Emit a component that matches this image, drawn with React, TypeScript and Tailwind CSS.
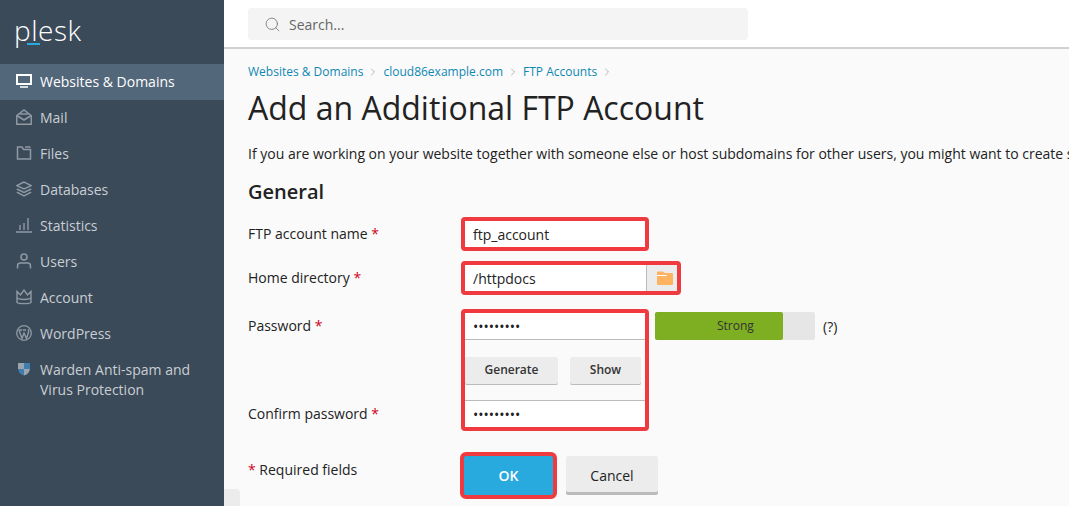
import { Search, ChevronRight } from 'lucide-react';
import type { ReactNode } from 'react';

const sans = { fontFamily: '"Open Sans", sans-serif' };

const MonitorIcon = () => (
  <svg width="16" height="14" viewBox="0 0 16 14" fill="none" stroke="currentColor">
    <rect x="1" y="1" width="14" height="9" strokeWidth="2" />
    <path d="M4 13h8" strokeWidth="1.5" />
  </svg>
);
const MailIcon = () => (
  <svg width="16" height="16" viewBox="0 0 16 16" fill="none" stroke="currentColor" strokeWidth="1.5">
    <path d="M.8 6.500 8 1l7.200 5.500v8.700H.8z" />
    <path d="M.8 6.500 8 11l7.200-4.500M3.500 5h9" />
  </svg>
);
const FilesIcon = () => (
  <svg width="16" height="14" viewBox="0 0 16 14" fill="none" stroke="currentColor" strokeWidth="1.5">
    <path d="M1.500 1v12h13V3.500H7.500L6 1z" />
    <path d="M9 1h5.500" />
  </svg>
);
const DatabaseIcon = () => (
  <svg width="16" height="16" viewBox="0 0 16 16" fill="none" stroke="currentColor" strokeWidth="1.5">
    <path d="M8 1 .8 4.600 8 8l7.200-3.400z" />
    <path d="M.8 8 8 11.400 15.200 8M.8 11.200 8 14.800l7.200-3.600" />
  </svg>
);
const StatsIcon = () => (
  <svg width="16" height="16" viewBox="0 0 16 16" fill="none" stroke="currentColor" strokeWidth="1.4">
    <path d="M0 15h16M4 13V8M8 13V6M12 13V1" />
  </svg>
);
const UserIcon = () => (
  <svg width="16" height="16" viewBox="0 0 16 16" fill="none" stroke="currentColor" strokeWidth="1.5">
    <circle cx="8" cy="4" r="3" />
    <path d="M1.500 15.500V13c0-2 1.500-3 3-3h7c1.500 0 3 1 3 3v2.500" />
  </svg>
);
const CrownIcon = () => (
  <svg width="16" height="16" viewBox="0 0 16 16" fill="none" stroke="currentColor" strokeWidth="1.4">
    <path d="M1 2.500 4.500 6 8 1l3.500 5L15 2.500v11c-2 1.500-12 1.500-14 0z" />
    <path d="M1 9c3 2 11 2 14 0" />
  </svg>
);
const WordPressIcon = () => (
  <svg width="16" height="16" viewBox="0 0 16 16" fill="none" stroke="currentColor">
    <circle cx="8" cy="8" r="7.300" strokeWidth="1.300" />
    <path d="M3 5.200 6 13.500 8 8 10.500 13.500 12.600 7c.4-1.300-.2-2.200-.6-2.700M2.600 5h3.600M7 5h3" strokeWidth="1.400" />
  </svg>
);
const ShieldIcon = () => (
  <svg width="12" height="14" viewBox="0 0 12 14">
    <path d="M0 1h6v6H0z" fill="#9aa5b0" />
    <path d="M6 1h6v6H6z" fill="#3f7fb0" />
    <path d="M0 7h6v6.500C3 13 1 11 0 7z" fill="#3f7fb0" />
    <path d="M6 7h6c-1 4-3 6-6 6.500z" fill="#9aa5b0" />
  </svg>
);
const FolderIcon = () => (
  <svg width="16" height="14" viewBox="0 0 16 14">
    <path d="M0 1.500A1 1 0 0 1 1 .5h5l1.500 1.500H15a1 1 0 0 1 1 1V4H0z" fill="#fdb35f" />
    <path d="M0 5h9l1-1h6v9a1 1 0 0 1-1 1H1a1 1 0 0 1-1-1z" fill="#fdb35f" />
    <path d="M0 4h10L9 5H0z" fill="#ffffff" />
  </svg>
);

const navItems: { label: ReactNode; icon: ReactNode; active?: boolean }[] = [
  { label: 'Websites & Domains', icon: <MonitorIcon />, active: true },
  { label: 'Mail', icon: <MailIcon /> },
  { label: 'Files', icon: <FilesIcon /> },
  { label: 'Databases', icon: <DatabaseIcon /> },
  { label: 'Statistics', icon: <StatsIcon /> },
  { label: 'Users', icon: <UserIcon /> },
  { label: 'Account', icon: <CrownIcon /> },
  { label: 'WordPress', icon: <WordPressIcon /> },
];

const Req = () => <span className="text-[#d0021b]">*</span>;

const Sidebar = () => (
  <aside className="w-[224px] shrink-0 bg-[#3b4a59] text-[14px]">
    <div className="h-[64px] pl-[14px] pt-[9px]">
      <div className="relative text-[28px] leading-[42px] font-light tracking-[0.5px] text-white">
        plesk
        <span className="absolute left-[13px] top-[34px] h-[2px] w-[13px] bg-[#28aade]" />
      </div>
    </div>
    <nav>
      {navItems.map((item, i) => (
        <div
          key={i}
          className={`flex h-[36px] items-center pb-[2px] pl-[16px] ${item.active ? 'bg-[#53677b] text-white' : 'text-[#c9ced4]'}`}
        >
          <span className={`flex w-[24px] shrink-0 ${item.active ? 'text-white' : 'text-[#8f99a3]'}`}>{item.icon}</span>
          {item.label}
        </div>
      ))}
      <div className="flex pl-[16px] pt-[8px] leading-[20px] text-[#c9ced4]">
        <span className="flex w-[24px] shrink-0 pl-[2px] pt-[2px]"><ShieldIcon /></span>
        <span>Warden Anti-spam and<br />Virus Protection</span>
      </div>
    </nav>
  </aside>
);

const Field = ({ value }: { value: string }) => (
  <div className="flex h-[26px] items-center bg-white pl-[8px] text-[14px] text-[#222]">
    {value}
  </div>
);

const FormButton = ({ children, className }: { children: ReactNode; className: string }) => (
  <div className={`flex h-[27px] items-center justify-center rounded-[2px] bg-[#ececec] text-[12px] font-semibold text-[#333] shadow-[0_1px_0_#bbb] ${className}`}>
    {children}
  </div>
);

export default function App() {
  return (
    <div className="flex h-[506px] w-[1069px] overflow-hidden bg-[#fafafa] text-[#222]" style={sans}>
      <Sidebar />
      <main className="relative min-w-0 flex-1">
        <header className="flex h-[49px] items-start border-b-2 border-[#d0d0d0] bg-white pl-[24px] pt-[8px]">
          <div className="flex h-[32px] w-[500px] items-center gap-[8px] rounded-[4px] bg-[#f4f4f4] pl-[16px] text-[14px] text-[#666]">
            <Search size={17} strokeWidth={1.2} className="text-[#777]" />
            Search...
          </div>
        </header>

        <div className="pl-[24px]">
          <div className="mt-[15px] flex h-[16px] items-center text-[12px] text-[#0f87b3]">
            Websites &amp; Domains
            <ChevronRight size={12} strokeWidth={1.2} className="mx-[4px] text-[#888]" />
            cloud86example.com
            <ChevronRight size={12} strokeWidth={1.2} className="mx-[4px] text-[#888]" />
            FTP Accounts
            <ChevronRight size={12} strokeWidth={1.2} className="mx-[4px] text-[#888]" />
          </div>
          <h1 className="mt-[6px] text-[32px] leading-[44px] text-[#222]">Add an Additional FTP Account</h1>
          <p className="mt-[14px] whitespace-nowrap text-[14px] leading-[20px]">
            If you are working on your website together with someone else or host subdomains for other users, you might want to create separate FTP accounts
          </p>
          <h2 className="mt-[14px] text-[20px] leading-[28px] font-semibold">General</h2>

          <div className="mt-[11px] grid grid-cols-[213px_auto] justify-start text-[14px]">
            <label className="pt-[7px] leading-[20px]">FTP account name <Req /></label>
            <div className="w-[188px] rounded-[4px] border-4 border-[#ef3a3f]">
              <Field value="ftp_account" />
            </div>

            <label className="mt-[10px] pt-[7px] leading-[20px]">Home directory <Req /></label>
            <div className="mt-[10px] flex w-[220px] rounded-[4px] border-4 border-[#ef3a3f]">
              <div className="flex-1 border-r border-[#bbb]"><Field value="/httpdocs" /></div>
              <div className="flex w-[30px] items-center justify-center bg-[#ececec] pl-[6px]"><FolderIcon /></div>
            </div>

            <div className="mt-[14px] flex flex-col justify-between pb-[7px] pt-[7px] leading-[20px]">
              <label>Password <Req /></label>
              <label>Confirm password <Req /></label>
            </div>
            <div className="mt-[14px] flex items-start">
              <div className="w-[188px] rounded-[4px] border-4 border-[#ef3a3f]">
                <div className="border-b border-[#bbb]"><Field value="•••••••••" /></div>
                <div className="flex h-[60px] items-center justify-between pr-[4px]">
                  <FormButton className="w-[93px]">Generate</FormButton>
                  <FormButton className="w-[71px]">Show</FormButton>
                </div>
                <div className="border-t border-[#bbb]"><Field value="•••••••••" /></div>
              </div>
              <div className="ml-[6px] mt-[3px] flex h-[28px] w-[160px] rounded-[2px] bg-[#e6e6e6] text-[12px]">
                <div className="relative flex w-[128px] items-center rounded-[2px] bg-[#7eae22] text-[#333]">
                  <span className="ml-[62px]">Strong</span>
                </div>
              </div>
              <span className="ml-[8px] mt-[8px] text-[14px] leading-[20px]">(?)</span>
            </div>

            <label className="mt-[21px] pt-[8px] leading-[20px]"><Req /> Required fields</label>
            <div className="mt-[21px] flex items-start">
              <div className="-ml-[1px] flex h-[47px] w-[97px] items-center justify-center rounded-[6px] border-4 border-[#ef3a3f] bg-[#28aade] text-[14px] font-semibold text-white">OK</div>
              <div className="ml-[9px] mt-[4px] flex h-[39px] w-[92px] items-center justify-center rounded-[2px] bg-[#ececec] font-medium text-[#222] shadow-[inset_0_-3px_0_#bbb]">Cancel</div>
            </div>
          </div>
        </div>

        <div className="absolute bottom-0 left-0 h-[17px] w-[16px] rounded-tr-[4px] bg-[#ececec]" />
      </main>
    </div>
  );
}
